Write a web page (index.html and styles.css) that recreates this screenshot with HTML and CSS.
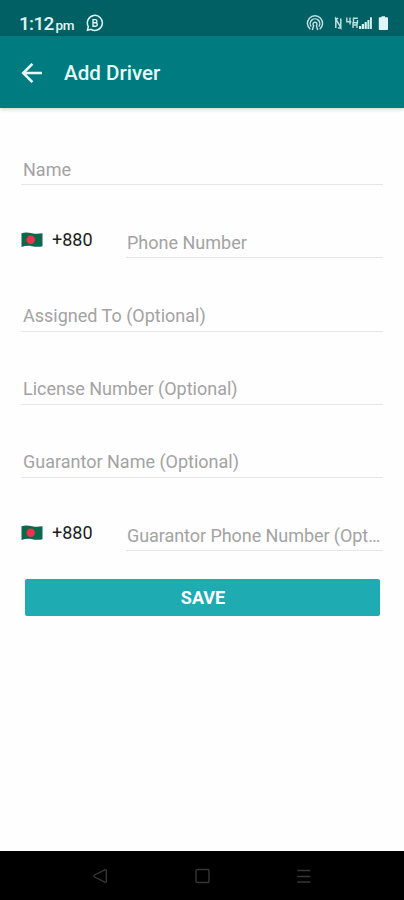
FILE: index.html
```
<!DOCTYPE html>
<html lang="en">
<head>
<meta charset="utf-8">
<title>Add Driver</title>
<link rel="stylesheet" href="styles.css">
</head>
<body>
<div class="screen">
  <div class="status">
    <span class="clock">1:12</span><span class="meridiem">pm</span>
    <svg class="chat" width="18" height="18" viewBox="0 0 18 18" fill="none" stroke="currentColor">
      <path d="M1.5 16.200l.8-3.700A7.500 7.500 0 1 1 5 15.300z" stroke-width="1.500"/>
      <path d="M7 5.600v6.600h2.600a1.700 1.700 0 0 0 0-3.400H7h2.300a1.600 1.600 0 0 0 0-3.200z" stroke-width="1.400"/>
    </svg>
    <svg class="indicators" width="82" height="18" viewBox="0 0 82 18" fill="none" stroke="currentColor">
      <g stroke-width="1.400" opacity=".88">
        <path d="M4.300 15.300a7.600 7.600 0 1 1 9.400 0"/>
        <path d="M5.200 12.600a4.800 4.800 0 1 1 7.600 0"/>
        <path d="M6.300 16l1.300-4.300a2 2 0 1 1 2.800 0l1.300 4.300"/>
      </g>
      <path d="M29.800 14V5l5 8.500V4.500M28.800 4.500h3.500M32 14h3.500" stroke-width="1.500" opacity=".85"/>
      <path d="M40.800 3.500v4.300h4.500M44 3.500v7M51.800 4.300H47.500v4.500h4V6M47 8v6M51 8.500V14M47 11h4" stroke-width="1.400" opacity=".85"/>
      <path d="M53 12h2.200v3H53zM55.800 10H58v5h-2.200zM58.600 8h2.200v7h-2.200zM61.400 6h2v9h-2zM64 3.200h1.900V15H64z" fill="currentColor" stroke="none" opacity=".95"/>
      <path d="M74 3.200h1.500V2.300h3.500v.9h2.200q.8 0 .8.800v11.200q0 .8-.8.800h-7.600q-.8 0-.8-.8V4q0-.8.800-.8z" fill="currentColor" stroke="none"/>
    </svg>
  </div>
  <header class="appbar">
    <svg class="back" width="22" height="22" viewBox="0 0 22 22" fill="none" stroke="currentColor" stroke-width="2.600">
      <path d="M21 11H2.600M11.400 1.800L2.200 11l9.200 9.200"/>
    </svg>
    <h1 class="title">Add Driver</h1>
  </header>
  <main class="form">
    <div class="row"><div class="field">Name</div></div>
    <div class="row">
      <div class="code">
        <svg class="flag" width="22" height="16" viewBox="0 0 22 16"><path d="M.5 1.200C4 .2 7 .4 11 1.200s7 .5 10.500 0v13c-3.500 1-7 .7-10.500 0S4 13.800.5 15z" fill="#08694c"/><circle cx="9.700" cy="7.800" r="4.300" fill="#ec3349"/></svg>
        <span class="dial">+880</span>
      </div>
      <div class="field">Phone Number</div>
    </div>
    <div class="row"><div class="field">Assigned To (Optional)</div></div>
    <div class="row"><div class="field">License Number (Optional)</div></div>
    <div class="row"><div class="field">Guarantor Name (Optional)</div></div>
    <div class="row">
      <div class="code">
        <svg class="flag" width="22" height="16" viewBox="0 0 22 16"><path d="M.5 1.200C4 .2 7 .4 11 1.200s7 .5 10.500 0v13c-3.500 1-7 .7-10.500 0S4 13.800.5 15z" fill="#08694c"/><circle cx="9.700" cy="7.800" r="4.300" fill="#ec3349"/></svg>
        <span class="dial">+880</span>
      </div>
      <div class="field long">Guarantor Phone Number (Opt…</div>
    </div>
    <button class="save" type="button">SAVE</button>
  </main>
  <nav class="navbar">
    <svg width="16" height="16" viewBox="0 0 16 16"><path d="M14.300 2.500v11q-.3 1.200-1.500.7L2.500 9q-1.200-1 0-2l10.300-5.200q1.200-.5 1.500.7z"/></svg>
    <svg width="16" height="16" viewBox="0 0 16 16"><rect x="2" y="1.500" width="13" height="13" rx="1.500"/></svg>
    <svg width="16" height="16" viewBox="0 0 16 16"><path d="M1.300 2.500h13M1.300 8.500h13M1.300 14h13"/></svg>
  </nav>
</div>
</body>
</html>
```
FILE: styles.css
```
* { box-sizing: border-box; }
body { margin: 0; font-family: Roboto, sans-serif; background: #fefefe; }
svg { display: block; flex: none; }
.screen { width: 404px; height: 900px; display: flex; flex-direction: column; overflow: hidden; }
.status { height: 36px; flex: none; display: flex; align-items: flex-start; padding: 14px 16px 0 19px; background: #006064; color: #e0f5f5; }
.clock { font-size: 19px; line-height: 20px; font-weight: 500; letter-spacing: -.7px; }
.meridiem { font-size: 13.500px; line-height: 23px; font-weight: 500; letter-spacing: -.5px; margin-left: 2px; }
.chat { margin-left: 12px; }
.indicators { margin-left: auto; }
.appbar { height: 72px; flex: none; display: flex; align-items: center; padding-left: 21px; background: #007c80; color: #e6fafa; box-shadow: 0 1px 4px rgba(0, 0, 0, .2); }
.back { margin-top: 1px; }
.title { margin: 2px 0 0 21px; font-size: 20.600px; line-height: 24px; font-weight: 500; }
.form { flex: 1; padding: 4px 21px 0; }
.row { height: 73.200px; display: flex; align-items: flex-end; }
.field { flex: 1; min-width: 0; height: 33px; padding: 5.500px 0 0 2px; border-bottom: 1px solid #e6e6e6; color: #a3a3a3; font-size: 18px; line-height: 24px; white-space: nowrap; }
.code + .field { padding-left: 1px; }
.long { letter-spacing: -.06px; }
.code { width: 105px; flex: none; display: flex; align-items: center; padding-bottom: 6px; }
.dial { margin-left: 9px; font-size: 18px; line-height: 24px; color: #1c1c1c; }
.save { display: block; width: 355px; height: 37px; margin: 28px 0 0 4px; padding: 1px 0 0 1px; border: 0; border-radius: 2px; background: #1eabb1; color: #fff; font: 700 18px/24px Roboto, sans-serif; }
.navbar { height: 49px; flex: none; display: flex; justify-content: space-between; align-items: center; padding: 1px 92px 0; background: #000; }
.navbar svg { fill: none; stroke: #363636; stroke-width: 1.400; }
```
